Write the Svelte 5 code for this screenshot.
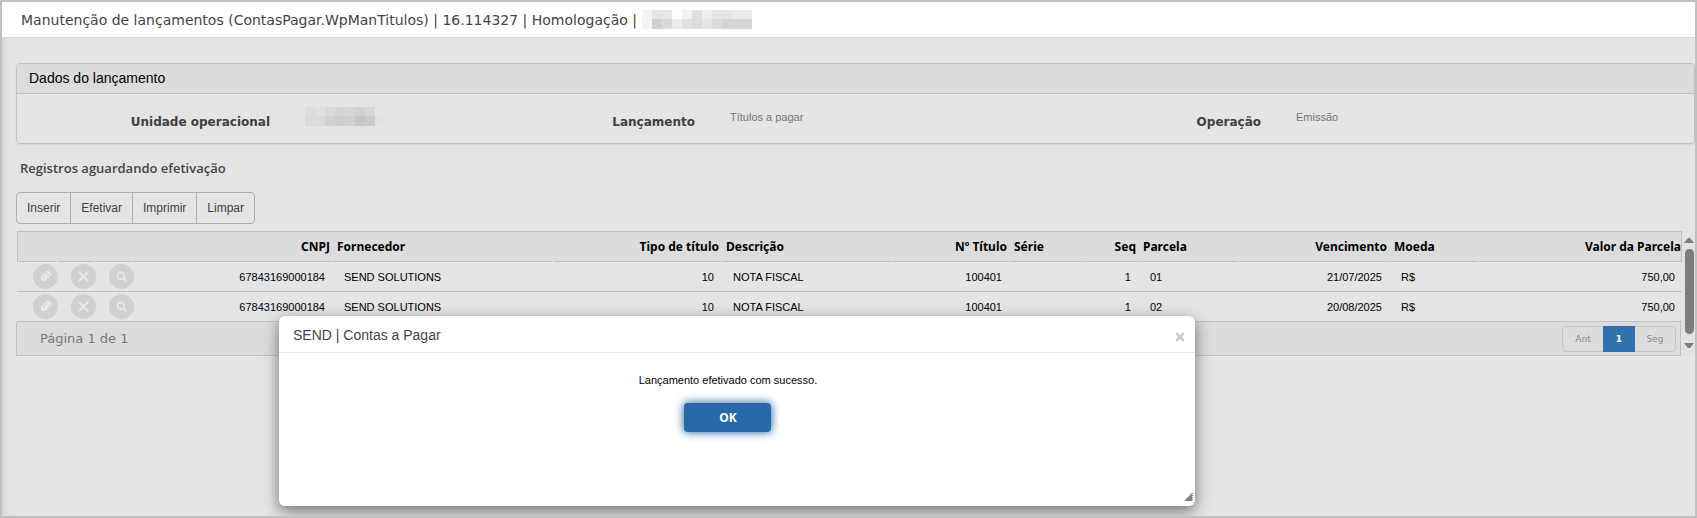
<script>
  const columns = [
    { key: 'edit', label: '', width: 39, action: 'Editar' },
    { key: 'remove', label: '', width: 38, action: 'Excluir' },
    { key: 'view', label: '', width: 38, action: 'Consultar' },
    { key: 'cnpj', label: 'CNPJ', width: 200, right: true },
    { key: 'fornecedor', label: 'Fornecedor', width: 220 },
    { key: 'tipo', label: 'Tipo de título', width: 169, right: true },
    { key: 'descricao', label: 'Descrição', width: 171 },
    { key: 'numero', label: 'Nº Título', width: 117, right: true },
    { key: 'serie', label: 'Série', width: 73 },
    { key: 'seq', label: 'Seq', width: 56, right: true },
    { key: 'parcela', label: 'Parcela', width: 100 },
    { key: 'vencimento', label: 'Vencimento', width: 151, right: true },
    { key: 'moeda', label: 'Moeda', width: 89 },
    { key: 'valor', label: 'Valor da Parcela', width: 204, right: true }
  ];
  const total = columns.reduce((sum, c) => sum + c.width, 0);

  const base = {
    cnpj: '67843169000184',
    fornecedor: 'SEND SOLUTIONS',
    tipo: '10',
    descricao: 'NOTA FISCAL',
    numero: '100401',
    serie: '',
    seq: '1',
    moeda: 'R$',
    valor: '750,00'
  };
  const rows = [
    { ...base, parcela: '01', vencimento: '21/07/2025' },
    { ...base, parcela: '02', vencimento: '20/08/2025' }
  ];

  const userMask = [
    ['#f3f3f3', '#e3e4e6', '#e7e6e6', '#fcfdfe', '#f2f2f1', '#dedee0', '#eeeeee', '#e4e4e4', '#e4e5e3', '#eaeaea', '#eaeaea'],
    ['#f3f3f3', '#cfcfd0', '#dad8d9', '#ebecee', '#e1e1df', '#dbdcde', '#e7e6e4', '#dadadd', '#d3d3d0', '#d4d4d4', '#d4d4d4']
  ];
  const unitMask = [
    ['#dcdcdc', '#e0e0df', '#d9d9d9', '#d4d5d3', '#d5d5d4', '#d1d1d1', '#d6d6d6', '#e4e4e4'],
    ['#dadada', '#dadada', '#cfd1d5', '#cfcdcb', '#cfcfce', '#c6c6c7', '#cbcbca', '#e1e1e2']
  ];

  let open = $state(true);
</script>

{#snippet mask(grid)}
  <span class="mask" aria-hidden="true">
    {#each grid as line}
      <span class="mask-line">
        {#each line as color}<i style="background: {color}"></i>{/each}
      </span>
    {/each}
  </span>
{/snippet}

<div class="shell">
  <header class="topbar">
    <h1>Manutenção de lançamentos (ContasPagar.WpManTitulos) | 16.114327 | Homologação |</h1>
    {@render mask(userMask)}
  </header>

  <main>
    <section class="panel">
      <h2>Dados do lançamento</h2>
      <dl>
        <dt>Unidade operacional</dt>
        <dd>{@render mask(unitMask)}</dd>
        <dt>Lançamento</dt>
        <dd>Títulos a pagar</dd>
        <dt>Operação</dt>
        <dd>Emissão</dd>
      </dl>
    </section>

    <h3>Registros aguardando efetivação</h3>

    <div class="toolbar">
      <button type="button">Inserir</button>
      <button type="button">Efetivar</button>
      <button type="button">Imprimir</button>
      <button type="button">Limpar</button>
    </div>

    <div class="grid">
      <div class="grid-main">
        <div class="table-wrap">
          <table>
            <colgroup>
              {#each columns as c}<col style="width: {(c.width / total) * 100}%" />{/each}
            </colgroup>
            <thead>
              <tr>
                {#each columns as c}
                  <th class:right={c.right} scope="col">{c.label}</th>
                {/each}
              </tr>
            </thead>
            <tbody>
              {#each rows as row}
                <tr>
                  {#each columns as c}
                    {#if c.action}
                      <td class="action">
                        <button type="button" aria-label={c.action}>
                          <svg viewBox="0 0 25 25" width="25" height="25">
                            {#if c.key === 'edit'}
                              <g transform="rotate(-45 12.5 12.5)">
                                <path d="M6.4 12.5l2.6-3v6z M9 9.5h6.4v6H9z M16.2 9.5h1.6a1 1 0 0 1 1 1v4a1 1 0 0 1-1 1h-1.6z" fill="#e8e8e8" />
                                <path d="M9.6 11.5h5.2" stroke="#d6d6d6" stroke-width="1" />
                              </g>
                            {:else if c.key === 'remove'}
                              <path d="M8.5 8.5l8 8m0-8l-8 8" stroke="#e8e8e8" stroke-width="2" stroke-linecap="round" />
                            {:else}
                              <circle cx="11.8" cy="11.8" r="3.4" fill="none" stroke="#e8e8e8" stroke-width="1.7" />
                              <path d="M14.4 14.4l2.4 2.4" stroke="#e8e8e8" stroke-width="2" stroke-linecap="round" />
                            {/if}
                          </svg>
                        </button>
                      </td>
                    {:else}
                      <td class:right={c.right}>{row[c.key]}</td>
                    {/if}
                  {/each}
                </tr>
              {/each}
            </tbody>
          </table>
        </div>
        <footer>
          <span>Página 1 de 1</span>
          <nav aria-label="Paginação">
            <button type="button">Ant</button>
            <button type="button" class="current" aria-current="page">1</button>
            <button type="button">Seg</button>
          </nav>
        </footer>
      </div>
      <div class="scrollbar" aria-hidden="true">
        <svg width="10" height="6" viewBox="0 0 10 6"><path d="M0 6L4 1h2l4 5z" /></svg>
        <span></span>
        <svg width="10" height="6" viewBox="0 0 10 6"><path d="M0 0l4 5h2l4-5z" /></svg>
      </div>
    </div>
  </main>

  {#if open}
    <div class="dialog" role="dialog" aria-labelledby="dialog-title">
      <div class="dialog-head">
        <h4 id="dialog-title">SEND | Contas a Pagar</h4>
        <button type="button" class="close" aria-label="Fechar" onclick={() => (open = false)}>
          <svg width="10" height="10" viewBox="0 0 10 10"><path d="M1.2 1.2l7.6 7.6m0-7.6l-7.6 7.6" stroke="#cbcbcb" stroke-width="2.6" /></svg>
        </button>
      </div>
      <div class="dialog-body">
        <p>Lançamento efetivado com sucesso.</p>
        <button type="button" class="ok" onclick={() => (open = false)}>OK</button>
      </div>
      <svg class="resize" width="9" height="8" viewBox="0 0 9 8"><path d="M0 8L8 0h1v1H8v1h1v1H8v1h1v1H8v1h1v1H8v1z" fill="#8a8282" /></svg>
    </div>
  {/if}
</div>

<style>
  :global(body) {
    margin: 0;
    background: #e4e4e4;
  }
  .shell {
    position: relative;
    box-sizing: border-box;
    min-height: 100vh;
    border: 2px solid #c0c0c0;
    background: linear-gradient(90deg, #d6d6d6, #e4e4e4 8px);
    overflow: hidden;
    font-family: 'Liberation Sans', Arial, sans-serif;
    font-size: 11px;
    color: #000;
  }
  h1, h2, h3, h4, dl, dd, p {
    margin: 0;
    font-weight: 400;
  }
  button {
    font: inherit;
    margin: 0;
    padding: 0;
    border: 0;
    background: none;
    cursor: pointer;
  }
  .topbar {
    display: flex;
    align-items: center;
    gap: 5px;
    height: 35px;
    padding-left: 19px;
    border-bottom: 1px solid #d5d5d5;
    background: #fff;
  }
  h1 {
    font: 14px/20px 'DejaVu Sans', Verdana, sans-serif;
    color: #444;
  }
  .mask, .mask-line {
    display: flex;
  }
  .mask {
    flex-direction: column;
  }
  .mask i {
    width: 10px;
    height: 10px;
  }
  .mask-line:first-child i {
    height: 9px;
  }
  main {
    padding: 25px 0 0 14px;
  }
  .panel {
    border: 1px solid #c0c0c0;
    border-radius: 4px;
    box-shadow: 0 1px 1px rgba(0, 0, 0, 0.06);
  }
  h2 {
    padding: 0 12px;
    border-bottom: 1px solid #c0c0c0;
    border-radius: 3px 3px 0 0;
    background: #dcdcdc;
    font-size: 14px;
    line-height: 29px;
  }
  dl {
    display: grid;
    grid-template-columns: 253fr 205fr 150fr 346fr 150fr 398fr;
    column-gap: 35px;
    height: 49px;
    align-items: start;
  }
  dt {
    padding-top: 20px;
    font: bold 12px/16px 'DejaVu Sans', Verdana, sans-serif;
    color: #404040;
    text-align: right;
    white-space: nowrap;
  }
  dd {
    padding-top: 13px;
    line-height: 20px;
    color: #777;
  }
  h3 {
    padding: 14px 4px 14px;
    font: 600 13px/20px 'Open Sans', Tahoma, sans-serif;
    color: #444;
  }
  .toolbar {
    display: flex;
    width: max-content;
    border: 1px solid #aeaeae;
    border-radius: 4px;
  }
  .toolbar button {
    padding: 0 10px;
    font-size: 12px;
    line-height: 28px;
    height: 30px;
    color: #404040;
  }
  .toolbar button + button {
    border-left: 1px solid #aeaeae;
  }
  .grid {
    display: flex;
    margin-top: 7px;
  }
  .grid-main {
    flex: 1;
    min-width: 0;
  }
  .table-wrap {
    padding-left: 1px;
  }
  table {
    width: 100%;
    table-layout: fixed;
    border-collapse: separate;
    border-spacing: 0;
    border-bottom: 1px solid #c0c0c0;
  }
  th {
    box-sizing: border-box;
    height: 31px;
    padding: 0 2px 0 5px;
    border-top: 1px solid #c0c0c0;
    background:
      linear-gradient(#c0c0c0, #c0c0c0) 1px 100% / 100% 1px no-repeat,
      linear-gradient(#ececec, #ececec) 0 100% / 1px 1px no-repeat,
      #dcdcdc;
    font: bold 12px/14px 'Noto Sans', Tahoma, sans-serif;
    text-align: left;
    white-space: nowrap;
  }
  th:first-child {
    border-left: 1px solid #c0c0c0;
  }
  th:last-child {
    padding-right: 0;
    border-right: 1px solid #c0c0c0;
  }
  td {
    box-sizing: border-box;
    height: 29px;
    padding: 1px 7px 0 12px;
    white-space: nowrap;
  }
  tbody tr + tr td {
    height: 30px;
    border-top: 1px solid #c0c0c0;
  }
  th.right, td.right {
    text-align: right;
  }
  td.action {
    padding: 0;
  }
  td.action button {
    display: block;
    width: 25px;
    height: 25px;
    margin: 0 -2px 0 auto;
    border-radius: 50%;
    background: #d0d0d0;
  }
  td.action svg {
    display: block;
  }
  footer {
    display: flex;
    align-items: center;
    justify-content: space-between;
    height: 34px;
    margin-right: 1px;
    padding: 0 4px 0 23px;
    border: 1px solid #c0c0c0;
    border-top: 0;
    box-sizing: border-box;
    background: #dcdcdc;
    font: 13px/16px 'DejaVu Sans', Verdana, sans-serif;
    color: #777;
  }
  nav {
    display: flex;
    border: 1px solid #c4c4c4;
    border-radius: 4px;
  }
  nav button {
    width: 40px;
    height: 24px;
    font-size: 9px;
    color: #8a8a8a;
  }
  nav .current {
    width: 32px;
    height: 26px;
    margin: -1px 0;
    background: #3071b0;
    color: #fff;
    font-weight: 700;
  }
  .scrollbar {
    display: flex;
    flex-direction: column;
    align-items: center;
    justify-content: space-between;
    box-sizing: border-box;
    width: 13px;
    padding: 6px 1px 7px 2px;
    background: #e2e2e2;
  }
  .scrollbar svg {
    fill: #7d7d7d;
  }
  .scrollbar span {
    flex: 1;
    width: 9px;
    margin: 6px 0 9px;
    border-radius: 5px;
    background: #7d7d7d;
  }
  .dialog {
    position: absolute;
    top: 314px;
    left: 277px;
    width: 54.1%;
    min-height: 190px;
    border-radius: 6px;
    background: #fff;
    box-shadow: 0 5px 15px rgba(0, 0, 0, 0.5);
  }
  .dialog-head {
    display: flex;
    align-items: center;
    justify-content: space-between;
    box-sizing: border-box;
    height: 37px;
    padding: 1px 10px 0 14px;
    border-bottom: 1px solid #e5e5e5;
  }
  h4 {
    font-size: 14px;
    line-height: 20px;
    color: #444;
  }
  .close {
    padding-top: 4px;
    line-height: 0;
  }
  .dialog-body {
    display: flex;
    flex-direction: column;
    align-items: center;
    gap: 15px;
    padding: 19px 18px 0 0;
    line-height: 16px;
  }
  .ok {
    width: 87px;
    height: 29px;
    border-radius: 4px;
    background: #2768a6;
    box-shadow: 0 0 8px 1px rgba(39, 104, 166, 0.9);
    color: #fff;
    font: bold 12px/16px 'Noto Sans', Tahoma, sans-serif;
  }
  .resize {
    position: absolute;
    right: 2px;
    bottom: 5px;
  }
</style>
